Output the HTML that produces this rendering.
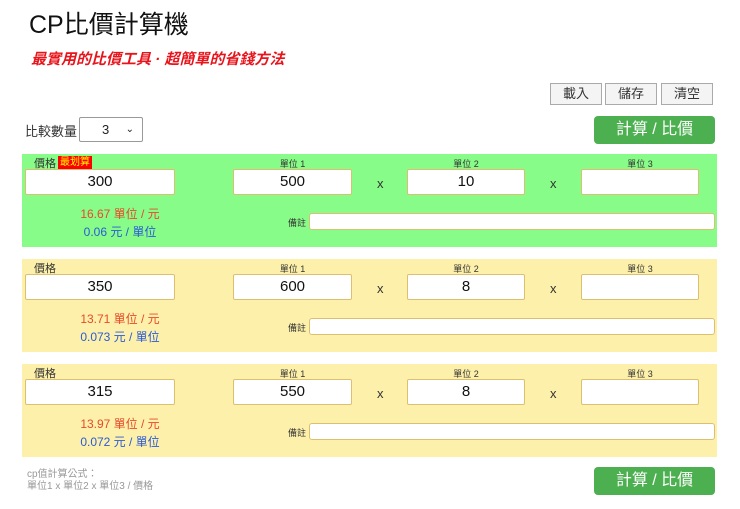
<!DOCTYPE html>
<html><head><meta charset="utf-8"><style>
*{box-sizing:border-box;margin:0;padding:0}
body{width:740px;height:509px;background:#fff;font-family:"Liberation Sans","Noto Sans CJK TC",sans-serif;position:relative;overflow:hidden;color:#222}
.a{position:absolute}
h1{position:absolute;left:29px;top:5px;font-size:25px;font-weight:normal;color:#111}
.sub{left:31px;top:48px;font-size:15px;color:#e8141c;font-style:italic;font-weight:bold}
.btn{position:absolute;top:83px;width:52px;height:22px;border:1px solid #aaa;background:#f4f4f4;font-size:13px;text-align:center;line-height:20px;color:#333}
.gb{position:absolute;left:594px;width:121px;height:28px;background:#4caf50;border-radius:4px;color:#fff;font-size:16px;text-align:center;line-height:28px}
.panel{position:absolute;left:22px;width:695px;height:93px}
.in{position:absolute;height:26px;background:#fff;border:1px solid #dcc070;border-radius:2px;font-size:15px;text-align:center;line-height:24px;color:#111}
.lb{position:absolute;font-size:9px;color:#333;text-align:center}
.x{position:absolute;font-size:13px;color:#333}
.r1{position:absolute;left:0;width:196px;text-align:center;font-size:12px;color:#e84a2a}
.r2{position:absolute;left:0;width:196px;text-align:center;font-size:12px;color:#2a5ad8}
.note{position:absolute;left:287px;width:406px;height:17px;background:#fff;border:1px solid #dcc070;border-radius:3px}
</style></head><body>
<h1>CP比價計算機</h1>
<div class="a sub">最實用的比價工具 · 超簡單的省錢方法</div>
<div class="btn" style="left:550px">載入</div>
<div class="btn" style="left:605px">儲存</div>
<div class="btn" style="left:661px">清空</div>
<div class="a" style="left:25px;top:121px;font-size:13px;color:#333">比較數量</div>
<div class="a" style="left:79px;top:117px;width:64px;height:25px;border:1px solid #999;border-radius:2px;font-size:13px;line-height:23px;padding-left:22px">3<span style="position:absolute;right:8px;top:0;font-size:10px">⌄</span></div>
<div class="gb" style="top:116px">計算 / 比價</div>

<div class="panel" style="top:154px;background:#88fc88">
<div class="lb" style="left:12px;top:1px;font-size:11px">價格</div>
<div class="a" style="left:36px;top:2px;background:#f00;color:#ff0;font-size:10px;padding:0 2px;height:13px;line-height:13px">最划算</div>
<div class="in" style="left:3px;top:15px;width:150px">300</div>
<div class="lb" style="left:211px;top:3px;width:119px">單位 1</div><div class="in" style="left:211px;top:15px;width:119px">500</div>
<div class="x" style="left:355px;top:22px">x</div>
<div class="lb" style="left:385px;top:3px;width:118px">單位 2</div><div class="in" style="left:385px;top:15px;width:118px">10</div>
<div class="x" style="left:528px;top:22px">x</div>
<div class="lb" style="left:559px;top:3px;width:118px">單位 3</div><div class="in" style="left:559px;top:15px;width:118px"></div>
<div class="r1" style="top:51px">16.67 單位 / 元</div><div class="r2" style="top:69px">0.06 元 / 單位</div>
<div class="lb" style="left:266px;top:62px">備註</div><div class="note" style="top:59px"></div>
</div>

<div class="panel" style="top:259px;background:#fdf0aa">
<div class="lb" style="left:12px;top:1px;font-size:11px">價格</div>
<div class="in" style="left:3px;top:15px;width:150px">350</div>
<div class="lb" style="left:211px;top:3px;width:119px">單位 1</div><div class="in" style="left:211px;top:15px;width:119px">600</div>
<div class="x" style="left:355px;top:22px">x</div>
<div class="lb" style="left:385px;top:3px;width:118px">單位 2</div><div class="in" style="left:385px;top:15px;width:118px">8</div>
<div class="x" style="left:528px;top:22px">x</div>
<div class="lb" style="left:559px;top:3px;width:118px">單位 3</div><div class="in" style="left:559px;top:15px;width:118px"></div>
<div class="r1" style="top:51px">13.71 單位 / 元</div><div class="r2" style="top:69px">0.073 元 / 單位</div>
<div class="lb" style="left:266px;top:62px">備註</div><div class="note" style="top:59px"></div>
</div>

<div class="panel" style="top:364px;background:#fdf0aa">
<div class="lb" style="left:12px;top:1px;font-size:11px">價格</div>
<div class="in" style="left:3px;top:15px;width:150px">315</div>
<div class="lb" style="left:211px;top:3px;width:119px">單位 1</div><div class="in" style="left:211px;top:15px;width:119px">550</div>
<div class="x" style="left:355px;top:22px">x</div>
<div class="lb" style="left:385px;top:3px;width:118px">單位 2</div><div class="in" style="left:385px;top:15px;width:118px">8</div>
<div class="x" style="left:528px;top:22px">x</div>
<div class="lb" style="left:559px;top:3px;width:118px">單位 3</div><div class="in" style="left:559px;top:15px;width:118px"></div>
<div class="r1" style="top:51px">13.97 單位 / 元</div><div class="r2" style="top:69px">0.072 元 / 單位</div>
<div class="lb" style="left:266px;top:62px">備註</div><div class="note" style="top:59px"></div>
</div>

<div class="a" style="left:27px;top:469px;font-size:10px;color:#999;line-height:12px">cp值計算公式：<br>單位1 x 單位2 x 單位3 / 價格</div>
<div class="gb" style="top:467px">計算 / 比價</div>
</body></html>
